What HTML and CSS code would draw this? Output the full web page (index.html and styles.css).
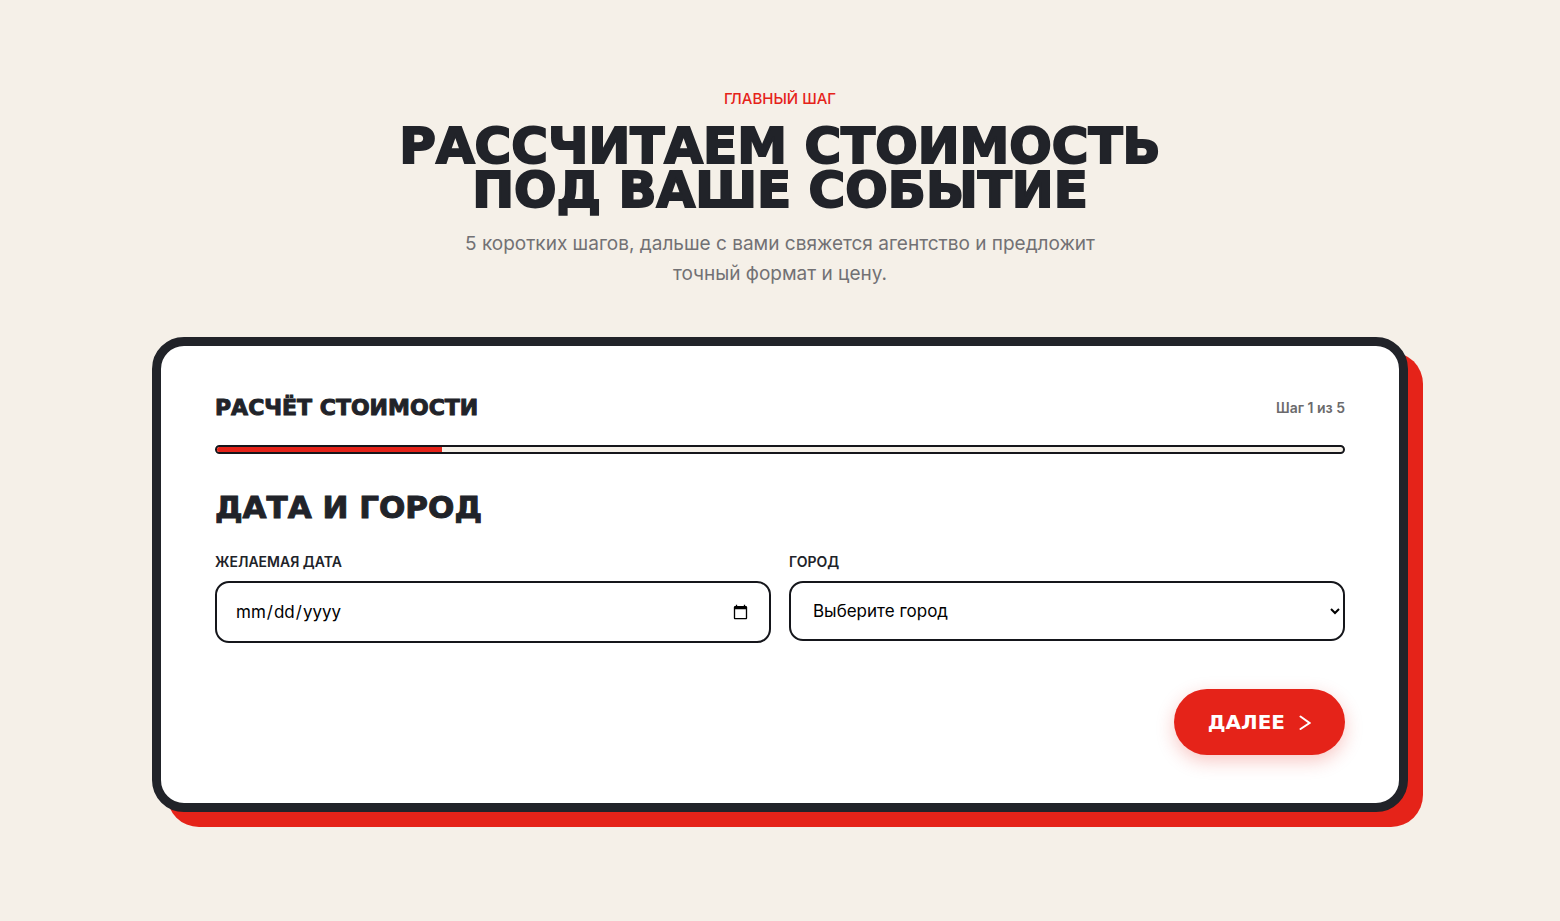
FILE: index.html
```html
<!DOCTYPE html>
<html lang="ru">
<head>
    <meta charset="UTF-8">
    <meta name="viewport" content="width=device-width, initial-scale=1.0">
    <title>Расчёт стоимости</title>
    <link rel="stylesheet" href="styles.css">
</head>
<body>

<main class="calc">
    <header class="intro">
        <p class="eyebrow">ГЛАВНЫЙ ШАГ</p>
        <h1>РАССЧИТАЕМ СТОИМОСТЬ<br>ПОД ВАШЕ СОБЫТИЕ</h1>
        <p class="lead">5 коротких шагов, дальше с вами свяжется агентство и предложит<br>точный формат и цену.</p>
    </header>

    <form class="card">
        <div class="card-head">
            <h2>РАСЧЁТ СТОИМОСТИ</h2>
            <span class="step">Шаг 1 из 5</span>
        </div>
        <div class="progress"><div class="progress-bar" style="width:20%"></div></div>

        <h3>ДАТА И ГОРОД</h3>
        <div class="fields">
            <div class="field">
                <label for="date">ЖЕЛАЕМАЯ ДАТА</label>
                <input type="date" id="date" name="date" lang="en-US">
            </div>
            <div class="field">
                <label for="city">ГОРОД</label>
                <select id="city" name="city">
                    <option value="">Выберите город</option>
                </select>
            </div>
        </div>

        <div class="actions">
            <button type="button" class="next">
                ДАЛЕЕ
                <svg width="12" height="16" viewBox="0 0 12 16" fill="none" stroke="currentColor" stroke-width="2" stroke-linecap="round" aria-hidden="true"><path d="M1.5 2.5 10.5 9 1.5 15"/></svg>
            </button>
        </div>
    </form>
</main>

</body>
</html>
```
FILE: styles.css
```css
*{ box-sizing:border-box; }
body{ margin:0; background:#f5f0e8; color:#212329; font-family:Inter, "Noto Sans", sans-serif; }
h1, h2, h3, p{ margin:0; }
h1, h2, h3, .next{ font-family:"DejaVu Sans", sans-serif; font-weight:700; }

.calc{ max-width:1320px; margin:0 auto; padding:89px 32px 93px; }

.intro{ text-align:center; margin-bottom:48px; }
.eyebrow{ color:#e52319; font-size:15px; line-height:20px; font-weight:500; }
h1{ margin-top:15px; font-size:50px; line-height:44px; -webkit-text-stroke:2px currentColor; }
.lead{ margin-top:17px; font-size:19px; line-height:30px; font-weight:400; color:#727174; }

.card{
    padding:48px 54px;
    background:#fff;
    border:9px solid #212329;
    border-radius:32px;
    box-shadow:15px 15px 0 #e52319;
}
.card-head{ display:flex; align-items:center; justify-content:space-between; }
h2{ font-size:22px; line-height:28px; -webkit-text-stroke:1px currentColor; }
.step{ font-size:14px; line-height:20px; font-weight:600; color:#6b6a6c; }

.progress{
    height:9px;
    margin-top:23px;
    background:#f5f0e8;
    border:2px solid #15161b;
    border-radius:5px;
    overflow:hidden;
}
.progress-bar{ height:100%; background:#e52319; }

h3{ margin-top:36px; font-size:31px; line-height:34px; -webkit-text-stroke:1px currentColor; }

.fields{ display:grid; grid-template-columns:1fr 1fr; gap:18px; align-items:start; margin-top:28px; }
.field{ display:flex; flex-direction:column; gap:9px; }
label{ font-size:14px; line-height:20px; font-weight:600; }
input, select{
    width:100%;
    height:62px;
    padding:0 18px;
    font:400 17px/24px Inter, "Noto Sans", sans-serif;
    color:#000;
    background:#fff;
    border:2px solid #15161b;
    border-radius:14px;
}
select{ height:60px; padding:0 0 0 18px; }

.actions{ display:flex; justify-content:flex-end; margin-top:46px; }
.next{
    display:flex;
    align-items:center;
    gap:14px;
    height:66px;
    padding:0 34px;
    border:0;
    border-radius:33px;
    background:#e52319;
    color:#fff;
    font-size:20px;
    box-shadow:0 6px 18px rgba(229, 35, 25, .25);
}
```
